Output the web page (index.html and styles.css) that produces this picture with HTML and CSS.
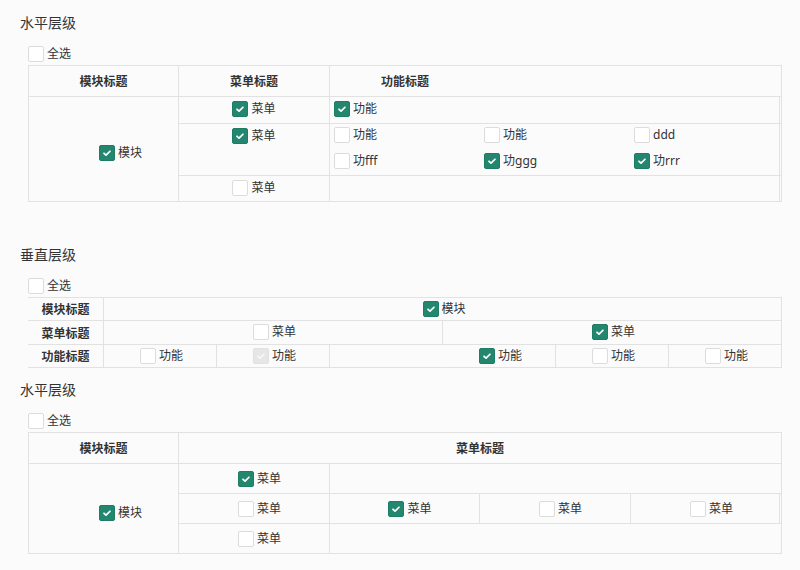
FILE: index.html
```html
<!DOCTYPE html>
<html lang="zh-CN">
<head>
<meta charset="utf-8">
<title>层级</title>
<link rel="stylesheet" href="styles.css">
</head>
<body>

<section class="sec sec1">
  <h2 class="title">水平层级</h2>
  <div class="cb-row"><span class="item"><span class="cb"></span><span class="lbl">全选</span></span></div>
  <table class="grid g1">
    <colgroup><col class="w150"><col class="w151"><col class="w452"></colgroup>
    <thead>
      <tr class="hrow"><th>模块标题</th><th>菜单标题</th><th class="fh"><span class="fh-in">功能标题</span></th></tr>
    </thead>
    <tbody>
      <tr class="r27">
        <td rowspan="3" class="mod m1"><span class="item"><span class="cb on"><svg viewBox="0 0 16 16"><path d="M4.6 8.3l2.3 2.2 4.5-4.5"/></svg></span><span class="lbl">模块</span></span></td>
        <td class="menu"><span class="item"><span class="cb on"><svg viewBox="0 0 16 16"><path d="M4.6 8.3l2.3 2.2 4.5-4.5"/></svg></span><span class="lbl">菜单</span></span></td>
        <td class="func dbl"><span class="item"><span class="cb on"><svg viewBox="0 0 16 16"><path d="M4.6 8.3l2.3 2.2 4.5-4.5"/></svg></span><span class="lbl">功能</span></span></td>
      </tr>
      <tr class="r52">
        <td class="menu"><span class="item"><span class="cb on"><svg viewBox="0 0 16 16"><path d="M4.6 8.3l2.3 2.2 4.5-4.5"/></svg></span><span class="lbl">菜单</span></span></td>
        <td class="func dbl">
          <div class="fgrid">
            <span class="item"><span class="cb"></span><span class="lbl">功能</span></span>
            <span class="item"><span class="cb"></span><span class="lbl">功能</span></span>
            <span class="item"><span class="cb"></span><span class="lbl">ddd</span></span>
            <span class="item"><span class="cb"></span><span class="lbl">功fff</span></span>
            <span class="item"><span class="cb on"><svg viewBox="0 0 16 16"><path d="M4.6 8.3l2.3 2.2 4.5-4.5"/></svg></span><span class="lbl">功ggg</span></span>
            <span class="item"><span class="cb on"><svg viewBox="0 0 16 16"><path d="M4.6 8.3l2.3 2.2 4.5-4.5"/></svg></span><span class="lbl">功rrr</span></span>
          </div>
        </td>
      </tr>
      <tr class="r26">
        <td class="menu"><span class="item"><span class="cb"></span><span class="lbl">菜单</span></span></td>
        <td class="func dbl"></td>
      </tr>
    </tbody>
  </table>
</section>

<section class="sec sec2">
  <h2 class="title">垂直层级</h2>
  <div class="cb-row"><span class="item"><span class="cb"></span><span class="lbl">全选</span></span></div>
  <table class="grid g2">
    <colgroup><col class="w76"><col class="w113"><col class="w113"><col class="w113"><col class="w113"><col class="w113"><col class="w113"></colgroup>
    <tbody>
      <tr class="r23">
        <th>模块标题</th>
        <td colspan="6" class="ctr"><span class="item"><span class="cb on"><svg viewBox="0 0 16 16"><path d="M4.6 8.3l2.3 2.2 4.5-4.5"/></svg></span><span class="lbl">模块</span></span></td>
      </tr>
      <tr class="r24">
        <th>菜单标题</th>
        <td colspan="3" class="ctr"><span class="item"><span class="cb"></span><span class="lbl">菜单</span></span></td>
        <td colspan="3" class="ctr"><span class="item"><span class="cb on"><svg viewBox="0 0 16 16"><path d="M4.6 8.3l2.3 2.2 4.5-4.5"/></svg></span><span class="lbl">菜单</span></span></td>
      </tr>
      <tr class="r23">
        <th>功能标题</th>
        <td class="ctr"><span class="item"><span class="cb"></span><span class="lbl">功能</span></span></td>
        <td class="ctr"><span class="item"><span class="cb dis"><svg viewBox="0 0 16 16"><path d="M4.6 8.3l2.3 2.2 4.5-4.5"/></svg></span><span class="lbl">功能</span></span></td>
        <td class="ctr nob"></td>
        <td class="ctr"><span class="item"><span class="cb on"><svg viewBox="0 0 16 16"><path d="M4.6 8.3l2.3 2.2 4.5-4.5"/></svg></span><span class="lbl">功能</span></span></td>
        <td class="ctr"><span class="item"><span class="cb"></span><span class="lbl">功能</span></span></td>
        <td class="ctr"><span class="item"><span class="cb"></span><span class="lbl">功能</span></span></td>
      </tr>
    </tbody>
  </table>
</section>

<section class="sec sec3">
  <h2 class="title">水平层级</h2>
  <div class="cb-row"><span class="item"><span class="cb"></span><span class="lbl">全选</span></span></div>
  <table class="grid g3">
    <colgroup><col class="w150"><col class="w151"><col class="w150"><col class="w151"><col class="w151"></colgroup>
    <thead>
      <tr class="hrow"><th>模块标题</th><th colspan="4">菜单标题</th></tr>
    </thead>
    <tbody>
      <tr class="r30">
        <td rowspan="3" class="mod m3"><span class="item"><span class="cb on"><svg viewBox="0 0 16 16"><path d="M4.6 8.3l2.3 2.2 4.5-4.5"/></svg></span><span class="lbl">模块</span></span></td>
        <td class="ctr sh"><span class="item"><span class="cb on"><svg viewBox="0 0 16 16"><path d="M4.6 8.3l2.3 2.2 4.5-4.5"/></svg></span><span class="lbl">菜单</span></span></td>
        <td colspan="3"></td>
      </tr>
      <tr class="r30">
        <td class="ctr sh"><span class="item"><span class="cb"></span><span class="lbl">菜单</span></span></td>
        <td class="ctr sh"><span class="item"><span class="cb on"><svg viewBox="0 0 16 16"><path d="M4.6 8.3l2.3 2.2 4.5-4.5"/></svg></span><span class="lbl">菜单</span></span></td>
        <td class="ctr sh"><span class="item"><span class="cb"></span><span class="lbl">菜单</span></span></td>
        <td class="ctr sh dbl"><span class="item"><span class="cb"></span><span class="lbl">菜单</span></span></td>
      </tr>
      <tr class="r30">
        <td class="ctr sh"><span class="item"><span class="cb"></span><span class="lbl">菜单</span></span></td>
        <td colspan="3"></td>
      </tr>
    </tbody>
  </table>
</section>

</body>
</html>
```

FILE: styles.css
```css
html, body {
  margin: 0;
  padding: 0;
  background: #fbfbfb;
}

body {
  padding: 13px 0 0 20px;
  font-family: "Noto Sans", "Noto Sans CJK SC", sans-serif;
  font-size: 12px;
  color: #333;
}

.title {
  margin: 0 0 13px;
  font-size: 14px;
  line-height: 20px;
  font-weight: normal;
  color: #333;
}

.sec1 { margin-bottom: 43px; }
.sec2 { margin-bottom: 12px; }

.cb-row {
  margin: 0 0 3px 8px;
  height: 16px;
  display: flex;
  align-items: center;
}

.item {
  display: inline-flex;
  align-items: center;
  gap: 3px;
  height: 16px;
  line-height: 16px;
  vertical-align: top;
  white-space: nowrap;
}

.lbl {
  font-size: 12px;
  color: #333;
}

.cb {
  box-sizing: border-box;
  width: 16px;
  height: 16px;
  flex: none;
  border: 1px solid #dcdcdc;
  border-radius: 2px;
  background: #fff;
  display: flex;
  align-items: center;
  justify-content: center;
}

.cb svg {
  width: 16px;
  height: 16px;
  display: block;
}

.cb path {
  fill: none;
  stroke: #fff;
  stroke-width: 2;
  stroke-linecap: round;
  stroke-linejoin: round;
}

.cb.on {
  background: #23876f;
  border-color: #1f7d66;
}

.cb.dis {
  background: #e6e6e6;
  border-color: #e0e0e0;
}

.cb.dis path {
  stroke: #f7f7f7;
}

/* tables */
.grid {
  box-sizing: border-box;
  margin-left: 8px;
  width: 754px;
  table-layout: fixed;
  border-collapse: separate;
  border-spacing: 0;
  border-top: 1px solid #e2e2e2;
  border-left: 1px solid #e2e2e2;
}

.grid th,
.grid td {
  box-sizing: border-box;
  padding: 0;
  border-right: 1px solid #e2e2e2;
  border-bottom: 1px solid #e2e2e2;
}

.grid th {
  font-size: 12px;
  font-weight: bold;
  color: #333;
  text-align: center;
  vertical-align: middle;
}

.w150 { width: 150px; }
.w151 { width: 151px; }
.w452 { width: 452px; }
.w76 { width: 76px; }
.w113 { width: 113px; }

.hrow { height: 31px; }
.r27 { height: 27px; }
.r52 { height: 52px; }
.r26 { height: 26px; }
.r23 { height: 23px; }
.r24 { height: 24px; }
.r30 { height: 30px; }

.grid .fh { text-align: left; }
.fh-in {
  display: inline-block;
  width: 150px;
  text-align: center;
}

.mod {
  vertical-align: top;
  text-align: left;
  padding-left: 70px !important;
}
.m1 { padding-top: 48px !important; }
.m3 { padding-top: 41px !important; }

.g1 .menu {
  text-align: center;
  vertical-align: top;
  padding-top: 4px;
}

.g1 .func {
  vertical-align: top;
  padding: 4px 0 0 4px;
}

.g1 .r52 .func {
  padding-top: 3px;
}

.dbl {
  box-shadow: inset -1px 0 0 #fbfbfb, inset -2px 0 0 #e2e2e2;
}

.fgrid {
  display: grid;
  grid-template-columns: 150px 150px 150px;
  row-gap: 10px;
}

.g2 {
  border-left: none;
  width: 754px;
}

.g2 th {
  text-align: center;
}

.ctr {
  text-align: center;
  vertical-align: middle;
}

.g2 .ctr { padding-left: 3px; }
.g2 .nob { border-right-color: transparent; }

.g3 .sh { padding-left: 11px; padding-top: 2px; }
```
